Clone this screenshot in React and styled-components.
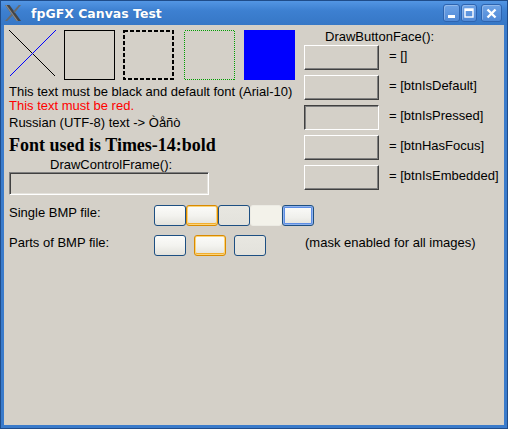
import React from "react";
import styled, { createGlobalStyle } from "styled-components";

const GlobalStyle = createGlobalStyle`
  html, body {
    margin: 0;
    padding: 0;
    background: #d4d0c8;
  }
  body {
    font-family: "Liberation Sans", Arial, sans-serif;
  }
`;

const Window = styled.div`
  width: 508px;
  height: 429px;
  box-sizing: border-box;
  display: flex;
  flex-direction: column;
  background: #3a7bcb;
  border: 1px solid #1f4c8a;
  padding: 0 3px 3px;
`;

const TitleBar = styled.div`
  height: 24px;
  flex: none;
  display: flex;
  align-items: center;
  margin: 0 -3px;
  padding: 0 5px 0 3px;
  background: linear-gradient(#5396e4, #3d80d1 40%, #3677c6);
`;

const Title = styled.span`
  margin-left: 9px;
  color: #fff;
  font-family: "DejaVu Sans", Verdana, sans-serif;
  font-weight: bold;
  font-size: 12.5px;
  text-shadow: 0 0 1px rgba(20, 50, 100, 0.4);
`;

const TitleButtons = styled.div`
  margin-left: auto;
  display: flex;
  align-items: center;
  gap: 1px;
`;

const TitleButton = styled.div`
  width: ${(p) => p.$w}px;
  height: 18px;
  margin-left: ${(p) => p.$ml || 0}px;
  box-sizing: border-box;
  border: 1px solid #2d64b0;
  border-radius: 3px;
  background: linear-gradient(#6ea3e6, #5089d6);
  box-shadow: inset 1px 1px 0 rgba(255, 255, 255, 0.25);
  display: flex;
  align-items: center;
  justify-content: center;
`;

const Client = styled.div`
  flex: 1;
  background: #d4d0c8;
  display: flex;
  flex-direction: column;
  color: #000;
  font-size: 13px;
  line-height: 14px;
`;

const TopArea = styled.div`
  display: flex;
`;

const LeftCol = styled.div`
  width: 300px;
  box-sizing: border-box;
  padding: 5px 0 0 5px;
  display: flex;
  flex-direction: column;
`;

const ShapesRow = styled.div`
  display: flex;
  align-items: flex-start;
  height: 50px;
`;

const ShapeSlot = styled.div`
  display: flex;
  margin-left: ${(p) => p.$ml || 0}px;
`;

const TextLine = styled.div`
  color: ${(p) => p.$color || "#000"};
  margin-top: ${(p) => p.$mt || 0}px;
  padding-left: ${(p) => p.$pl || 0}px;
  white-space: nowrap;
`;

const BoldTimes = styled.div`
  font-family: "Liberation Serif", "Times New Roman", serif;
  font-weight: bold;
  font-size: 18px;
  line-height: 20px;
  margin-top: 5px;
  white-space: nowrap;
`;

const ControlFrame = styled.div`
  width: 200px;
  height: 23px;
  box-sizing: border-box;
  border: 1px solid;
  border-color: #808080 #ffffff #ffffff #808080;
  box-shadow: inset 1px 1px 0 #404040, inset -1px -1px 0 #e4e2dc;
`;

const RightCol = styled.div`
  flex: 1;
  padding-top: 5px;
  display: flex;
  flex-direction: column;
`;

const Caption = styled.div`
  padding-left: 21px;
  margin-bottom: 1px;
`;

const FaceRow = styled.div`
  display: flex;
  align-items: flex-start;
  gap: 10px;
  margin-bottom: 5px;
`;

const ButtonFace = styled.div`
  width: 75px;
  height: 25px;
  box-sizing: border-box;
  border: 1px solid;
  border-color: ${(p) =>
    p.$pressed ? "#404040 #ffffff #ffffff #404040" : "#ffffff #404040 #404040 #ffffff"};
  box-shadow: ${(p) =>
    p.$pressed ? "inset 1px 1px 0 #808080" : "inset -1px -1px 0 #808080"};
  background: #d4d0c8;
`;

const FaceLabel = styled.span`
  margin-top: 4px;
  white-space: nowrap;
`;

const BmpRow = styled.div`
  display: flex;
  align-items: flex-start;
  padding-left: 5px;
  margin-top: ${(p) => p.$mt}px;
`;

const BmpLabel = styled.div`
  width: 145px;
  margin-top: 1px;
  white-space: nowrap;
`;

const BmpGroup = styled.div`
  display: flex;
  gap: ${(p) => p.$gap}px;
`;

const Note = styled.div`
  margin: 1px 0 0 39px;
  white-space: nowrap;
`;

const bmpStyles = {
  normal: {
    border: "#1d4f82",
    bg: "linear-gradient(#fbfbf9, #f3f3ef 50%, #e3e2dc)",
    shadow: "none",
  },
  default: {
    border: "#d98a00",
    bg: "linear-gradient(#fbfbf9, #f3f3ef 50%, #e3e2dc)",
    shadow: "inset 0 0 0 1px #fbd47a, inset 0 -1px 0 1px #f2ae2e",
  },
  pressed: {
    border: "#1d4f82",
    bg: "linear-gradient(#e8e7e1, #e3e2dc)",
    shadow: "none",
  },
  disabled: {
    border: "#ecebe4",
    bg: "#f3f2ea",
    shadow: "none",
  },
  focus: {
    border: "#1d4f82",
    bg: "linear-gradient(#fbfbf9, #f0f0ec 60%, #e3e2dc)",
    shadow: "inset 0 0 0 1px #8fb2ee, inset 0 0 0 2px #5d8ee4",
  },
};

const BmpButton = styled.div`
  width: 32px;
  height: 21px;
  box-sizing: border-box;
  border-radius: 3px;
  border: 1px solid ${(p) => bmpStyles[p.$kind].border};
  background: ${(p) => bmpStyles[p.$kind].bg};
  box-shadow: ${(p) => bmpStyles[p.$kind].shadow};
`;

function XLogo() {
  return (
    <svg width="18" height="18" viewBox="0 0 18 18">
      <polygon points="1,1 5.5,1 17,17 12.5,17" fill="#444" />
      <polygon points="1,1 2.6,1 14.1,17 12.5,17" fill="#8a8a8a" />
      <polygon points="14.8,1 17,1 10.6,8.9 9.4,7.3" fill="#6a6a6a" />
      <polygon points="7.7,9.6 8.9,11.2 3.2,17 1,17" fill="#6a6a6a" />
    </svg>
  );
}

function CrossShape() {
  return (
    <svg width="47" height="47" shapeRendering="crispEdges">
      <line x1="0.5" y1="0.5" x2="46.5" y2="46.5" stroke="#000" strokeWidth="1" />
      <line x1="0.5" y1="46.5" x2="46.5" y2="0.5" stroke="#0000ff" strokeWidth="1" />
    </svg>
  );
}

function RectShape({ stroke, width = 1, dash, fill = "none" }) {
  const off = width / 2;
  return (
    <svg width="51" height="50" shapeRendering="crispEdges">
      <rect
        x={off}
        y={off}
        width={51 - width}
        height={50 - width}
        fill={fill}
        stroke={stroke}
        strokeWidth={width}
        strokeDasharray={dash}
      />
    </svg>
  );
}

const faces = [
  { label: "= []" },
  { label: "= [btnIsDefault]" },
  { label: "= [btnIsPressed]", pressed: true },
  { label: "= [btnHasFocus]" },
  { label: "= [btnIsEmbedded]" },
];

export default function App() {
  return (
    <>
      <GlobalStyle />
      <Window>
        <TitleBar>
          <XLogo />
          <Title>fpGFX Canvas Test</Title>
          <TitleButtons>
            <TitleButton $w={17}>
              <svg width="9" height="12" viewBox="0 0 9 12">
                <rect x="1" y="8" width="7" height="3" fill="#fff" />
              </svg>
            </TitleButton>
            <TitleButton $w={16}>
              <svg width="10" height="10" viewBox="0 0 10 10">
                <rect x="1" y="1" width="8" height="8" fill="none" stroke="#fff" strokeWidth="1.4" />
                <rect x="1" y="1" width="8" height="2" fill="#fff" />
              </svg>
            </TitleButton>
            <TitleButton $w={21} $ml={3}>
              <svg width="11" height="11" viewBox="0 0 11 11">
                <path d="M1.5 1.5 L9.5 9.5 M9.5 1.5 L1.5 9.5" stroke="#fff" strokeWidth="2.4" />
              </svg>
            </TitleButton>
          </TitleButtons>
        </TitleBar>
        <Client>
          <TopArea>
            <LeftCol>
              <ShapesRow>
                <ShapeSlot>
                  <CrossShape />
                </ShapeSlot>
                <ShapeSlot $ml={8}>
                  <RectShape stroke="#000" />
                </ShapeSlot>
                <ShapeSlot $ml={8}>
                  <RectShape stroke="#000" width={2} dash="4 2" />
                </ShapeSlot>
                <ShapeSlot $ml={10}>
                  <RectShape stroke="#00a000" dash="1 1" />
                </ShapeSlot>
                <ShapeSlot $ml={9}>
                  <RectShape stroke="#0000ff" fill="#0000ff" />
                </ShapeSlot>
              </ShapesRow>
              <TextLine $mt={5}>This text must be black and default font (Arial-10)</TextLine>
              <TextLine $color="#ff0000">This text must be red.</TextLine>
              <TextLine $mt={3}>Russian (UTF-8) text -&gt; Òåñò</TextLine>
              <BoldTimes>Font used is Times-14:bold</BoldTimes>
              <TextLine $mt={3} $pl={41}>DrawControlFrame():</TextLine>
              <ControlFrame />
            </LeftCol>
            <RightCol>
              <Caption>DrawButtonFace():</Caption>
              {faces.map((f) => (
                <FaceRow key={f.label}>
                  <ButtonFace $pressed={f.pressed} />
                  <FaceLabel>{f.label}</FaceLabel>
                </FaceRow>
              ))}
            </RightCol>
          </TopArea>
          <BmpRow $mt={10}>
            <BmpLabel>Single BMP file:</BmpLabel>
            <BmpGroup $gap={0}>
              <BmpButton $kind="normal" />
              <BmpButton $kind="default" />
              <BmpButton $kind="pressed" />
              <BmpButton $kind="disabled" />
              <BmpButton $kind="focus" />
            </BmpGroup>
          </BmpRow>
          <BmpRow $mt={9}>
            <BmpLabel>Parts of BMP file:</BmpLabel>
            <BmpGroup $gap={8}>
              <BmpButton $kind="normal" />
              <BmpButton $kind="default" />
              <BmpButton $kind="pressed" />
            </BmpGroup>
            <Note>(mask enabled for all images)</Note>
          </BmpRow>
        </Client>
      </Window>
    </>
  );
}
